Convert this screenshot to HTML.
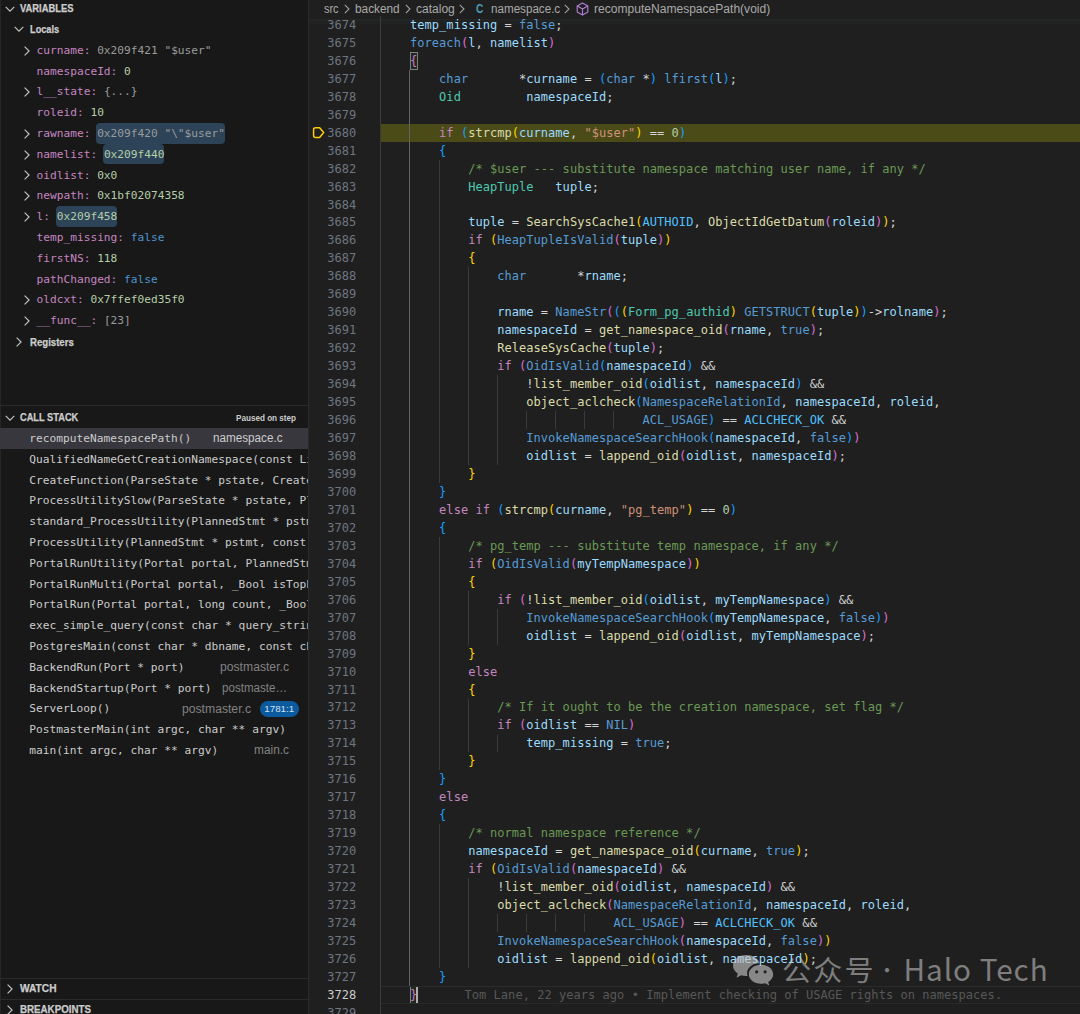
<!DOCTYPE html>
<html><head><meta charset="utf-8"><title>debug</title>
<style>
html,body{margin:0;padding:0;background:#1f1f1f;}
body{width:1080px;height:1014px;overflow:hidden;position:relative;font-family:"Liberation Sans",sans-serif;}
#side{position:absolute;left:0;top:0;width:308px;box-shadow:inset 1px 0 0 #262626;height:1014px;background:#181818;border-right:1px solid #2b2b2b;overflow:hidden;}
#ed{position:absolute;left:0;top:0;width:1080px;height:1014px;overflow:hidden}
.t{position:absolute;white-space:nowrap;transform-origin:0 50%}
.chv{position:absolute}
.hb{-webkit-text-stroke:0.25px #cccccc}
.vr{position:absolute;left:36.6px;height:20.8px;line-height:20.8px;font-family:"DejaVu Sans Mono","Liberation Mono",monospace;font-size:11.18px;white-space:pre;color:#cccccc}
.nm{color:#c586c0}
.vv{color:#9b9b9b}
.vv.vn{color:#b5cea8}
.vv.vb{color:#4e94ce}
.vv.chg{background:#2c4358;border-radius:4px;padding:4px 0px 3.8px 1px;margin-left:-1px}
.sr{position:absolute;left:0;width:308px;height:20.8px;line-height:20.8px;overflow:hidden;white-space:pre}
.sr.sel{background:#37373d}
.sr .fn{position:absolute;left:29.2px;top:1.2px;letter-spacing:0.03px;font-family:"DejaVu Sans Mono","Liberation Mono",monospace;font-size:11.18px;color:#cccccc}
.bd{position:absolute;left:260px;width:38.5px;height:16.6px;border-radius:8.3px;background:#0b5a9e;color:#d0e0f0;font-size:9.8px;line-height:16.8px;text-align:center}
.sep{position:absolute;left:0;width:308px;height:1px;background:#2b2b2b}
.ln{position:absolute;left:309px;width:47.4px;text-align:right;height:17.963px;line-height:17.963px;font-family:"DejaVu Sans Mono","Liberation Mono",monospace;font-size:12.0px;letter-spacing:0.0404px;color:#6e7681;white-space:pre}
.ln.act{color:#cccccc}
.cd{position:absolute;height:17.963px;line-height:17.963px;font-family:"DejaVu Sans Mono","Liberation Mono",monospace;font-size:12.0px;white-space:pre;letter-spacing:0.0404px;color:#d4d4d4}
.c{color:#6a9955}.s{color:#ce9178}.n{color:#b5cea8}.k{color:#c586c0}.m{color:#569cd6}.e{color:#4fc1ff}.y{color:#4ec9b0}.f{color:#dcdcaa}.v{color:#9cdcfe}
.b0{color:#ffd700}.b1{color:#da70d6}.b2{color:#179fff}
.bmx{position:absolute;width:8.2px;height:17.963px;box-sizing:border-box;border:1px solid #808080;background:#1c2a1c}
.cur{position:absolute;width:1.8px;height:16.963px;background:#aeafad}
.g{position:absolute;width:1px;background:#3a3a3a;display:block}
.g.ga{background:#646464}
.hl{position:absolute;left:380px;right:0;height:18.063000000000002px;background:#4b4b18}
.cl{position:absolute;left:381px;right:0;height:15.963000000000001px;border-top:1px solid #2a2a2a;border-bottom:1px solid #2a2a2a}
.blame{color:#585858;margin-left:47.22px}
#bcbar{position:absolute;left:309px;top:0;right:0;height:18.5px;background:#1f1f1f}
#bcsh{position:absolute;left:309px;top:18.5px;right:0;height:6px;background:linear-gradient(#232625,#1f1f1f)}
#wm{position:absolute;left:0;top:0;width:1080px;height:1014px;pointer-events:none}
.wt{position:absolute;height:40px;line-height:40px;white-space:nowrap;color:rgba(200,200,200,0.56);font-family:"Noto Sans CJK SC","Liberation Sans",sans-serif}
</style></head><body>
<div id="side">
<svg class="chv" style="left:3.85px;top:2.80px" width="12" height="12" viewBox="0 0 12 12"><path d="M1.7 3.8 L6 8.1 L10.3 3.8" fill="none" stroke="#c5c5c5" stroke-width="1.15"/></svg>
<div class="t hb" style="left:19.70px;top:-0.90px;height:20px;line-height:20px;font-size:10.4px;font-weight:bold;color:#cccccc;transform:scaleX(0.9035)">VARIABLES</div>
<svg class="chv" style="left:12.90px;top:23.40px" width="12" height="12" viewBox="0 0 12 12"><path d="M1.7 3.8 L6 8.1 L10.3 3.8" fill="none" stroke="#c5c5c5" stroke-width="1.15"/></svg>
<div class="t hb" style="left:29.60px;top:20.00px;height:20px;line-height:20px;font-size:10.4px;font-weight:bold;color:#cccccc;transform:scaleX(0.8863)">Locals</div>
<svg class="chv" style="left:21.00px;top:44.50px" width="12" height="12" viewBox="0 0 12 12"><path d="M3.6 1.6 L8.1 6 L3.6 10.4" fill="none" stroke="#c5c5c5" stroke-width="1.15"/></svg>
<div class="vr" style="top:40.70px"><span class="nm">curname:</span> <span class="vv vv">0x209f421 &quot;$user&quot;</span></div>
<div class="vr" style="top:61.50px"><span class="nm">namespaceId:</span> <span class="vv vn">0</span></div>
<svg class="chv" style="left:21.00px;top:86.10px" width="12" height="12" viewBox="0 0 12 12"><path d="M3.6 1.6 L8.1 6 L3.6 10.4" fill="none" stroke="#c5c5c5" stroke-width="1.15"/></svg>
<div class="vr" style="top:82.30px"><span class="nm">l__state:</span> <span class="vv vv">{...}</span></div>
<div class="vr" style="top:103.10px"><span class="nm">roleid:</span> <span class="vv vn">10</span></div>
<svg class="chv" style="left:21.00px;top:127.70px" width="12" height="12" viewBox="0 0 12 12"><path d="M3.6 1.6 L8.1 6 L3.6 10.4" fill="none" stroke="#c5c5c5" stroke-width="1.15"/></svg>
<div class="vr" style="top:123.90px"><span class="nm">rawname:</span> <span class="vv vv chg">0x209f420 &quot;\&quot;$user&quot;</span></div>
<svg class="chv" style="left:21.00px;top:148.50px" width="12" height="12" viewBox="0 0 12 12"><path d="M3.6 1.6 L8.1 6 L3.6 10.4" fill="none" stroke="#c5c5c5" stroke-width="1.15"/></svg>
<div class="vr" style="top:144.70px"><span class="nm">namelist:</span> <span class="vv vn chg">0x209f440</span></div>
<svg class="chv" style="left:21.00px;top:169.30px" width="12" height="12" viewBox="0 0 12 12"><path d="M3.6 1.6 L8.1 6 L3.6 10.4" fill="none" stroke="#c5c5c5" stroke-width="1.15"/></svg>
<div class="vr" style="top:165.50px"><span class="nm">oidlist:</span> <span class="vv vn">0x0</span></div>
<svg class="chv" style="left:21.00px;top:190.10px" width="12" height="12" viewBox="0 0 12 12"><path d="M3.6 1.6 L8.1 6 L3.6 10.4" fill="none" stroke="#c5c5c5" stroke-width="1.15"/></svg>
<div class="vr" style="top:186.30px"><span class="nm">newpath:</span> <span class="vv vn">0x1bf02074358</span></div>
<svg class="chv" style="left:21.00px;top:210.90px" width="12" height="12" viewBox="0 0 12 12"><path d="M3.6 1.6 L8.1 6 L3.6 10.4" fill="none" stroke="#c5c5c5" stroke-width="1.15"/></svg>
<div class="vr" style="top:207.10px"><span class="nm">l:</span> <span class="vv vn chg">0x209f458</span></div>
<div class="vr" style="top:227.90px"><span class="nm">temp_missing:</span> <span class="vv vb">false</span></div>
<div class="vr" style="top:248.70px"><span class="nm">firstNS:</span> <span class="vv vn">118</span></div>
<div class="vr" style="top:269.50px"><span class="nm">pathChanged:</span> <span class="vv vb">false</span></div>
<svg class="chv" style="left:21.00px;top:294.10px" width="12" height="12" viewBox="0 0 12 12"><path d="M3.6 1.6 L8.1 6 L3.6 10.4" fill="none" stroke="#c5c5c5" stroke-width="1.15"/></svg>
<div class="vr" style="top:290.30px"><span class="nm">oldcxt:</span> <span class="vv vn">0x7ffef0ed35f0</span></div>
<svg class="chv" style="left:21.00px;top:314.90px" width="12" height="12" viewBox="0 0 12 12"><path d="M3.6 1.6 L8.1 6 L3.6 10.4" fill="none" stroke="#c5c5c5" stroke-width="1.15"/></svg>
<div class="vr" style="top:311.10px"><span class="nm">__func__:</span> <span class="vv vv">[23]</span></div>
<svg class="chv" style="left:13.30px;top:335.80px" width="12" height="12" viewBox="0 0 12 12"><path d="M3.6 1.6 L8.1 6 L3.6 10.4" fill="none" stroke="#c5c5c5" stroke-width="1.15"/></svg>
<div class="t hb" style="left:29.60px;top:332.50px;height:20px;line-height:20px;font-size:10.4px;font-weight:bold;color:#cccccc;transform:scaleX(0.9240)">Registers</div>
<div class="sep" style="top:405px"></div>
<svg class="chv" style="left:3.85px;top:412.10px" width="12" height="12" viewBox="0 0 12 12"><path d="M1.7 3.8 L6 8.1 L10.3 3.8" fill="none" stroke="#c5c5c5" stroke-width="1.15"/></svg>
<div class="t hb" style="left:19.70px;top:408.20px;height:20px;line-height:20px;font-size:10.4px;font-weight:bold;color:#cccccc;transform:scaleX(0.8904)">CALL STACK</div>
<div class="t " style="left:236.00px;top:407.70px;height:20px;line-height:20px;font-size:9.5px;font-weight:bold;color:#cccccc;transform:scaleX(0.8545)">Paused on step</div>
<div class="sr sel" style="top:427.80px"><span class="fn">recomputeNamespacePath()</span></div>
<div class="t " style="left:213.30px;top:428.30px;height:20.8px;line-height:20.8px;font-size:12.3px;color:#cccccc;transform:scaleX(0.9500)">namespace.c</div>
<div class="sr" style="top:448.60px"><span class="fn">QualifiedNameGetCreationNamespace(const List * names, char ** objname_p)</span></div>
<div class="sr" style="top:469.40px"><span class="fn">CreateFunction(ParseState * pstate, CreateFunctionStmt * stmt)</span></div>
<div class="sr" style="top:490.20px"><span class="fn">ProcessUtilitySlow(ParseState * pstate, PlannedStmt * pstmt, const char * queryString)</span></div>
<div class="sr" style="top:511.00px"><span class="fn">standard_ProcessUtility(PlannedStmt * pstmt, const char * queryString)</span></div>
<div class="sr" style="top:531.80px"><span class="fn">ProcessUtility(PlannedStmt * pstmt, const char * queryString)</span></div>
<div class="sr" style="top:552.60px"><span class="fn">PortalRunUtility(Portal portal, PlannedStmt * pstmt, _Bool isTopLevel)</span></div>
<div class="sr" style="top:573.40px"><span class="fn">PortalRunMulti(Portal portal, _Bool isTopLevel, _Bool setHoldSnapshot)</span></div>
<div class="sr" style="top:594.20px"><span class="fn">PortalRun(Portal portal, long count, _Bool isTopLevel, _Bool run_once)</span></div>
<div class="sr" style="top:615.00px"><span class="fn">exec_simple_query(const char * query_string)</span></div>
<div class="sr" style="top:635.80px"><span class="fn">PostgresMain(const char * dbname, const char * username)</span></div>
<div class="sr" style="top:656.60px"><span class="fn">BackendRun(Port * port)</span></div>
<div class="t " style="left:219.50px;top:657.10px;height:20.8px;line-height:20.8px;font-size:12.3px;color:#828282;transform:scaleX(0.9895)">postmaster.c</div>
<div class="sr" style="top:677.40px"><span class="fn">BackendStartup(Port * port)</span></div>
<div class="t " style="left:221.50px;top:677.90px;height:20.8px;line-height:20.8px;font-size:12.3px;color:#828282;transform:scaleX(0.9414)">postmaste…</div>
<div class="sr" style="top:698.20px"><span class="fn">ServerLoop()</span></div>
<div class="t " style="left:181.50px;top:698.70px;height:20.8px;line-height:20.8px;font-size:12.3px;color:#828282;transform:scaleX(0.9895)">postmaster.c</div>
<div class="bd" style="top:700.70px">1781:1</div>
<div class="sr" style="top:719.00px"><span class="fn">PostmasterMain(int argc, char ** argv)</span></div>
<div class="sr" style="top:739.80px"><span class="fn">main(int argc, char ** argv)</span></div>
<div class="t " style="left:253.50px;top:740.30px;height:20.8px;line-height:20.8px;font-size:12.3px;color:#828282;transform:scaleX(0.9661)">main.c</div>
<div class="sep" style="top:978px"></div>
<svg class="chv" style="left:4.20px;top:982.60px" width="12" height="12" viewBox="0 0 12 12"><path d="M3.6 1.6 L8.1 6 L3.6 10.4" fill="none" stroke="#c5c5c5" stroke-width="1.15"/></svg>
<div class="t hb" style="left:19.60px;top:979.30px;height:20px;line-height:20px;font-size:10.4px;font-weight:bold;color:#cccccc;transform:scaleX(0.9771)">WATCH</div>
<div class="sep" style="top:999px"></div>
<svg class="chv" style="left:4.20px;top:1003.50px" width="12" height="12" viewBox="0 0 12 12"><path d="M3.6 1.6 L8.1 6 L3.6 10.4" fill="none" stroke="#c5c5c5" stroke-width="1.15"/></svg>
<div class="t hb" style="left:19.60px;top:999.80px;height:20px;line-height:20px;font-size:10.4px;font-weight:bold;color:#cccccc;transform:scaleX(0.9380)">BREAKPOINTS</div>
</div>
<div id="ed">
<div id="bcsh"></div>
<div class="bmx" style="left:409.76px;top:51.93px"></div><div class="bmx" style="left:409.76px;top:986.00px"></div><div class="cur" style="left:415.93px;top:986.50px"></div><div class="hl" style="top:123.78px"></div><div class="cl" style="top:986.00px"></div>
<i class="g" style="left:380.40px;top:16.00px;height:1005.93px"></i>
<i class="g ga" style="left:409.46px;top:69.89px;height:916.11px"></i>
<i class="g" style="left:438.52px;top:159.70px;height:323.33px"></i>
<i class="g" style="left:438.52px;top:536.93px;height:233.52px"></i>
<i class="g" style="left:438.52px;top:824.34px;height:143.70px"></i>
<i class="g" style="left:467.58px;top:267.48px;height:197.59px"></i>
<i class="g" style="left:467.58px;top:590.82px;height:53.89px"></i>
<i class="g" style="left:467.58px;top:698.59px;height:53.89px"></i>
<i class="g" style="left:467.58px;top:878.22px;height:89.81px"></i>
<i class="g" style="left:496.64px;top:375.26px;height:89.81px"></i>
<i class="g" style="left:496.64px;top:608.78px;height:35.93px"></i>
<i class="g" style="left:496.64px;top:734.52px;height:17.96px"></i>
<i class="g" style="left:496.64px;top:914.15px;height:17.96px"></i>
<i class="g" style="left:525.70px;top:411.19px;height:17.96px"></i>
<i class="g" style="left:525.70px;top:914.15px;height:17.96px"></i>
<i class="g" style="left:554.76px;top:411.19px;height:17.96px"></i>
<i class="g" style="left:554.76px;top:914.15px;height:17.96px"></i>
<i class="g" style="left:583.82px;top:411.19px;height:17.96px"></i>
<i class="g" style="left:583.82px;top:914.15px;height:17.96px"></i>
<i class="g" style="left:612.88px;top:411.19px;height:17.96px"></i>
<div class="ln" style="top:16.90px">3674</div>
<div class="cd" style="top:16.90px;left:410.06px"><span class="v">temp_missing</span> = <span class="m">false</span>;</div>
<div class="ln" style="top:34.86px">3675</div>
<div class="cd" style="top:34.86px;left:410.06px"><span class="m">foreach</span><span class="b1">(</span><span class="v">l</span>, <span class="v">namelist</span><span class="b1">)</span></div>
<div class="ln" style="top:52.83px">3676</div>
<div class="cd" style="top:52.83px;left:410.06px"><span class="b1">{</span></div>
<div class="ln" style="top:70.79px">3677</div>
<div class="cd" style="top:70.79px;left:439.12px"><span class="m">char</span>       *<span class="v">curname</span> = <span class="b2">(</span><span class="m">char</span> *<span class="b2">)</span> <span class="m">lfirst</span><span class="b2">(</span><span class="v">l</span><span class="b2">)</span>;</div>
<div class="ln" style="top:88.75px">3678</div>
<div class="cd" style="top:88.75px;left:439.12px"><span class="y">Oid</span>         <span class="v">namespaceId</span>;</div>
<div class="ln" style="top:106.72px">3679</div>
<div class="ln" style="top:124.68px">3680</div>
<div class="cd" style="top:124.68px;left:439.12px"><span class="k">if</span> <span class="b2">(</span><span class="f">strcmp</span><span class="b0">(</span><span class="v">curname</span>, <span class="s">&quot;$user&quot;</span><span class="b0">)</span> == <span class="n">0</span><span class="b2">)</span></div>
<div class="ln" style="top:142.64px">3681</div>
<div class="cd" style="top:142.64px;left:439.12px"><span class="b2">{</span></div>
<div class="ln" style="top:160.60px">3682</div>
<div class="cd" style="top:160.60px;left:468.18px"><span class="c">/* $user --- substitute namespace matching user name, if any */</span></div>
<div class="ln" style="top:178.57px">3683</div>
<div class="cd" style="top:178.57px;left:468.18px"><span class="y">HeapTuple</span>   <span class="v">tuple</span>;</div>
<div class="ln" style="top:196.53px">3684</div>
<div class="ln" style="top:214.49px">3685</div>
<div class="cd" style="top:214.49px;left:468.18px"><span class="v">tuple</span> = <span class="f">SearchSysCache1</span><span class="b0">(</span><span class="e">AUTHOID</span>, <span class="f">ObjectIdGetDatum</span><span class="b1">(</span><span class="v">roleid</span><span class="b1">)</span><span class="b0">)</span>;</div>
<div class="ln" style="top:232.46px">3686</div>
<div class="cd" style="top:232.46px;left:468.18px"><span class="k">if</span> <span class="b0">(</span><span class="m">HeapTupleIsValid</span><span class="b1">(</span><span class="v">tuple</span><span class="b1">)</span><span class="b0">)</span></div>
<div class="ln" style="top:250.42px">3687</div>
<div class="cd" style="top:250.42px;left:468.18px"><span class="b0">{</span></div>
<div class="ln" style="top:268.38px">3688</div>
<div class="cd" style="top:268.38px;left:497.24px"><span class="m">char</span>       *<span class="v">rname</span>;</div>
<div class="ln" style="top:286.34px">3689</div>
<div class="ln" style="top:304.31px">3690</div>
<div class="cd" style="top:304.31px;left:497.24px"><span class="v">rname</span> = <span class="m">NameStr</span><span class="b1">(</span><span class="b2">(</span><span class="b0">(</span><span class="y">Form_pg_authid</span><span class="b0">)</span> <span class="m">GETSTRUCT</span><span class="b0">(</span><span class="v">tuple</span><span class="b0">)</span><span class="b2">)</span>-&gt;<span class="v">rolname</span><span class="b1">)</span>;</div>
<div class="ln" style="top:322.27px">3691</div>
<div class="cd" style="top:322.27px;left:497.24px"><span class="v">namespaceId</span> = <span class="f">get_namespace_oid</span><span class="b1">(</span><span class="v">rname</span>, <span class="m">true</span><span class="b1">)</span>;</div>
<div class="ln" style="top:340.23px">3692</div>
<div class="cd" style="top:340.23px;left:497.24px"><span class="f">ReleaseSysCache</span><span class="b1">(</span><span class="v">tuple</span><span class="b1">)</span>;</div>
<div class="ln" style="top:358.20px">3693</div>
<div class="cd" style="top:358.20px;left:497.24px"><span class="k">if</span> <span class="b1">(</span><span class="m">OidIsValid</span><span class="b2">(</span><span class="v">namespaceId</span><span class="b2">)</span> &amp;&amp;</div>
<div class="ln" style="top:376.16px">3694</div>
<div class="cd" style="top:376.16px;left:526.30px">!<span class="f">list_member_oid</span><span class="b2">(</span><span class="v">oidlist</span>, <span class="v">namespaceId</span><span class="b2">)</span> &amp;&amp;</div>
<div class="ln" style="top:394.12px">3695</div>
<div class="cd" style="top:394.12px;left:526.30px"><span class="f">object_aclcheck</span><span class="b2">(</span><span class="m">NamespaceRelationId</span>, <span class="v">namespaceId</span>, <span class="v">roleid</span>,</div>
<div class="ln" style="top:412.09px">3696</div>
<div class="cd" style="top:412.09px;left:642.54px"><span class="m">ACL_USAGE</span><span class="b2">)</span> == <span class="e">ACLCHECK_OK</span> &amp;&amp;</div>
<div class="ln" style="top:430.05px">3697</div>
<div class="cd" style="top:430.05px;left:526.30px"><span class="m">InvokeNamespaceSearchHook</span><span class="b2">(</span><span class="v">namespaceId</span>, <span class="m">false</span><span class="b2">)</span><span class="b1">)</span></div>
<div class="ln" style="top:448.01px">3698</div>
<div class="cd" style="top:448.01px;left:526.30px"><span class="v">oidlist</span> = <span class="f">lappend_oid</span><span class="b1">(</span><span class="v">oidlist</span>, <span class="v">namespaceId</span><span class="b1">)</span>;</div>
<div class="ln" style="top:465.98px">3699</div>
<div class="cd" style="top:465.98px;left:468.18px"><span class="b0">}</span></div>
<div class="ln" style="top:483.94px">3700</div>
<div class="cd" style="top:483.94px;left:439.12px"><span class="b2">}</span></div>
<div class="ln" style="top:501.90px">3701</div>
<div class="cd" style="top:501.90px;left:439.12px"><span class="k">else</span> <span class="k">if</span> <span class="b2">(</span><span class="f">strcmp</span><span class="b0">(</span><span class="v">curname</span>, <span class="s">&quot;pg_temp&quot;</span><span class="b0">)</span> == <span class="n">0</span><span class="b2">)</span></div>
<div class="ln" style="top:519.86px">3702</div>
<div class="cd" style="top:519.86px;left:439.12px"><span class="b2">{</span></div>
<div class="ln" style="top:537.83px">3703</div>
<div class="cd" style="top:537.83px;left:468.18px"><span class="c">/* pg_temp --- substitute temp namespace, if any */</span></div>
<div class="ln" style="top:555.79px">3704</div>
<div class="cd" style="top:555.79px;left:468.18px"><span class="k">if</span> <span class="b0">(</span><span class="m">OidIsValid</span><span class="b1">(</span><span class="v">myTempNamespace</span><span class="b1">)</span><span class="b0">)</span></div>
<div class="ln" style="top:573.75px">3705</div>
<div class="cd" style="top:573.75px;left:468.18px"><span class="b0">{</span></div>
<div class="ln" style="top:591.72px">3706</div>
<div class="cd" style="top:591.72px;left:497.24px"><span class="k">if</span> <span class="b1">(</span>!<span class="f">list_member_oid</span><span class="b2">(</span><span class="v">oidlist</span>, <span class="v">myTempNamespace</span><span class="b2">)</span> &amp;&amp;</div>
<div class="ln" style="top:609.68px">3707</div>
<div class="cd" style="top:609.68px;left:526.30px"><span class="m">InvokeNamespaceSearchHook</span><span class="b2">(</span><span class="v">myTempNamespace</span>, <span class="m">false</span><span class="b2">)</span><span class="b1">)</span></div>
<div class="ln" style="top:627.64px">3708</div>
<div class="cd" style="top:627.64px;left:526.30px"><span class="v">oidlist</span> = <span class="f">lappend_oid</span><span class="b1">(</span><span class="v">oidlist</span>, <span class="v">myTempNamespace</span><span class="b1">)</span>;</div>
<div class="ln" style="top:645.61px">3709</div>
<div class="cd" style="top:645.61px;left:468.18px"><span class="b0">}</span></div>
<div class="ln" style="top:663.57px">3710</div>
<div class="cd" style="top:663.57px;left:468.18px"><span class="k">else</span></div>
<div class="ln" style="top:681.53px">3711</div>
<div class="cd" style="top:681.53px;left:468.18px"><span class="b0">{</span></div>
<div class="ln" style="top:699.49px">3712</div>
<div class="cd" style="top:699.49px;left:497.24px"><span class="c">/* If it ought to be the creation namespace, set flag */</span></div>
<div class="ln" style="top:717.46px">3713</div>
<div class="cd" style="top:717.46px;left:497.24px"><span class="k">if</span> <span class="b1">(</span><span class="v">oidlist</span> == <span class="m">NIL</span><span class="b1">)</span></div>
<div class="ln" style="top:735.42px">3714</div>
<div class="cd" style="top:735.42px;left:526.30px"><span class="v">temp_missing</span> = <span class="m">true</span>;</div>
<div class="ln" style="top:753.38px">3715</div>
<div class="cd" style="top:753.38px;left:468.18px"><span class="b0">}</span></div>
<div class="ln" style="top:771.35px">3716</div>
<div class="cd" style="top:771.35px;left:439.12px"><span class="b2">}</span></div>
<div class="ln" style="top:789.31px">3717</div>
<div class="cd" style="top:789.31px;left:439.12px"><span class="k">else</span></div>
<div class="ln" style="top:807.27px">3718</div>
<div class="cd" style="top:807.27px;left:439.12px"><span class="b2">{</span></div>
<div class="ln" style="top:825.24px">3719</div>
<div class="cd" style="top:825.24px;left:468.18px"><span class="c">/* normal namespace reference */</span></div>
<div class="ln" style="top:843.20px">3720</div>
<div class="cd" style="top:843.20px;left:468.18px"><span class="v">namespaceId</span> = <span class="f">get_namespace_oid</span><span class="b0">(</span><span class="v">curname</span>, <span class="m">true</span><span class="b0">)</span>;</div>
<div class="ln" style="top:861.16px">3721</div>
<div class="cd" style="top:861.16px;left:468.18px"><span class="k">if</span> <span class="b0">(</span><span class="m">OidIsValid</span><span class="b1">(</span><span class="v">namespaceId</span><span class="b1">)</span> &amp;&amp;</div>
<div class="ln" style="top:879.12px">3722</div>
<div class="cd" style="top:879.12px;left:497.24px">!<span class="f">list_member_oid</span><span class="b1">(</span><span class="v">oidlist</span>, <span class="v">namespaceId</span><span class="b1">)</span> &amp;&amp;</div>
<div class="ln" style="top:897.09px">3723</div>
<div class="cd" style="top:897.09px;left:497.24px"><span class="f">object_aclcheck</span><span class="b1">(</span><span class="m">NamespaceRelationId</span>, <span class="v">namespaceId</span>, <span class="v">roleid</span>,</div>
<div class="ln" style="top:915.05px">3724</div>
<div class="cd" style="top:915.05px;left:613.48px"><span class="m">ACL_USAGE</span><span class="b1">)</span> == <span class="e">ACLCHECK_OK</span> &amp;&amp;</div>
<div class="ln" style="top:933.01px">3725</div>
<div class="cd" style="top:933.01px;left:497.24px"><span class="m">InvokeNamespaceSearchHook</span><span class="b1">(</span><span class="v">namespaceId</span>, <span class="m">false</span><span class="b1">)</span><span class="b0">)</span></div>
<div class="ln" style="top:950.98px">3726</div>
<div class="cd" style="top:950.98px;left:497.24px"><span class="v">oidlist</span> = <span class="f">lappend_oid</span><span class="b0">(</span><span class="v">oidlist</span>, <span class="v">namespaceId</span><span class="b0">)</span>;</div>
<div class="ln" style="top:968.94px">3727</div>
<div class="cd" style="top:968.94px;left:439.12px"><span class="b2">}</span></div>
<div class="ln act" style="top:986.90px">3728</div>
<div class="cd" style="top:986.90px;left:410.06px"><span class="b1">}</span><span class="blame">Tom Lane, 22 years ago • Implement checking of USAGE rights on namespaces.</span></div>
<div class="ln" style="top:1004.87px">3729</div>

<div class="t " style="left:323.80px;top:-1.00px;height:20px;line-height:20px;font-size:12.3px;color:#a9a9a9;transform:scaleX(0.8904)">src</div>
<div class="t " style="left:354.90px;top:-1.00px;height:20px;line-height:20px;font-size:12.3px;color:#a9a9a9;transform:scaleX(0.9612)">backend</div>
<div class="t " style="left:415.60px;top:-1.00px;height:20px;line-height:20px;font-size:12.3px;color:#a9a9a9;transform:scaleX(0.9782)">catalog</div>
<div class="t " style="left:490.90px;top:-1.00px;height:20px;line-height:20px;font-size:12.3px;color:#a9a9a9;transform:scaleX(0.9459)">namespace.c</div>
<div class="t " style="left:593.80px;top:-1.00px;height:20px;line-height:20px;font-size:12.3px;color:#a9a9a9;transform:scaleX(0.9805)">recomputeNamespacePath(void)</div>
<div class="t " style="left:475.60px;top:-1.00px;height:20px;line-height:20px;font-size:12.3px;font-weight:bold;color:#519aba;transform:scaleX(0.8218)">C</div>
<svg class="chv" style="left:340.60px;top:3.00px" width="12" height="12" viewBox="0 0 12 12"><path d="M3.8 1.8 L8 6 L3.8 10.2" fill="none" stroke="#a0a0a0" stroke-width="1.1"/></svg>
<svg class="chv" style="left:401.50px;top:3.00px" width="12" height="12" viewBox="0 0 12 12"><path d="M3.8 1.8 L8 6 L3.8 10.2" fill="none" stroke="#a0a0a0" stroke-width="1.1"/></svg>
<svg class="chv" style="left:456.30px;top:3.00px" width="12" height="12" viewBox="0 0 12 12"><path d="M3.8 1.8 L8 6 L3.8 10.2" fill="none" stroke="#a0a0a0" stroke-width="1.1"/></svg>
<svg class="chv" style="left:561.40px;top:3.00px" width="12" height="12" viewBox="0 0 12 12"><path d="M3.8 1.8 L8 6 L3.8 10.2" fill="none" stroke="#a0a0a0" stroke-width="1.1"/></svg>
<svg class="chv" style="left:576.3px;top:2.4px" width="13" height="14" viewBox="0 0 13 14"><path d="M6.5 1 L11.8 3.9 V10.1 L6.5 13 L1.2 10.1 V3.9 Z M1.4 4 L6.5 6.9 L11.6 4 M6.5 6.9 V12.8" fill="none" stroke="#b180d7" stroke-width="1.1" stroke-linejoin="round"/></svg>
<svg style="position:absolute;left:312px;top:126px" width="14" height="13" viewBox="0 0 14 13"><path d="M3.4 1.7 H7.6 L11.7 6.6 L7.6 11.5 H3.4 Q1.6 11.5 1.6 9.7 V3.5 Q1.6 1.7 3.4 1.7 Z" fill="none" stroke="#ffcc00" stroke-width="1.5" stroke-linejoin="round"/></svg>
</div>
<div id="wm">
<svg style="position:absolute;left:730px;top:952px" width="48" height="38" viewBox="730 952 48 38">
<g fill="#c8c8c8" fill-opacity="0.62">
<path d="M746 955 C738.8 955 733 959.7 733 965.5 C733 968.8 734.9 971.7 737.8 973.6 L736.5 977.8 L741.3 975.2 C742.8 975.7 744.3 976 746 976 C746.5 976 747 976 747.5 975.9 C747.2 975.1 747.1 974.2 747.1 973.3 C747.1 967.7 752.6 963.3 759 963.3 C759.2 963.3 759.4 963.3 759.6 963.3 C758.3 958.5 752.7 955 746 955 Z"/>
<path d="M761 964.8 C754.3 964.8 748.8 969 748.8 974.3 C748.8 979.6 754.3 983.8 761 983.8 C762.4 983.8 763.8 983.6 765.1 983.2 L769.3 985.6 L768.2 981.9 C771.2 980.2 773.2 977.4 773.2 974.3 C773.2 969 767.7 964.8 761 964.8 Z M756.7 970.2 A1.6 1.6 0 1 1 756.7 973.4 A1.6 1.6 0 1 1 756.7 970.2 Z M765.1 970.2 A1.6 1.6 0 1 1 765.1 973.4 A1.6 1.6 0 1 1 765.1 970.2 Z" fill-rule="evenodd"/>
</g></svg>
<div class="wt" style="left:781.6px;top:949.2px;font-size:28px;letter-spacing:2px;transform:scaleX(1.04);transform-origin:0 50%">公众号</div>
<div class="wt" style="left:876.9px;top:950.0px;font-size:20px">·</div>
<div class="wt" style="left:903.5px;top:948.8px;font-size:29.7px;letter-spacing:0.95px">Halo Tech</div>
</div>
</body></html>
